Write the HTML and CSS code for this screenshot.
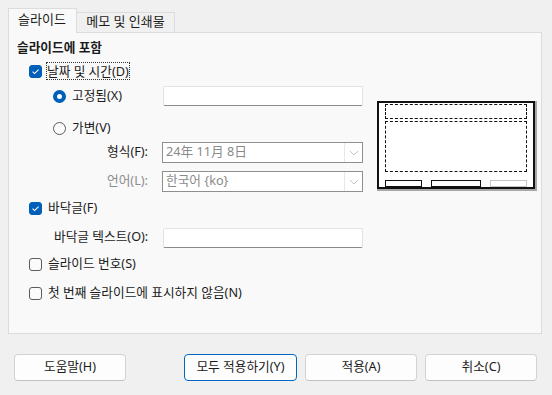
FILE: index.html
```html
<!DOCTYPE html>
<html lang="ko">
<head>
<meta charset="utf-8">
<link rel="stylesheet" href="styles.css">
</head>
<body>
<div class="dialog">
  <div class="tabs">
    <div class="tab active">슬라이드</div>
    <div class="tab">메모 및 인쇄물</div>
  </div>
  <div class="panel">
    <div class="form">
      <div class="row heading">슬라이드에 포함</div>
      <div class="row r-date">
        <span class="check on"><svg viewBox="0 0 13 13" width="13" height="13"><path d="M3.6 6.7 L5.6 8.6 L9.6 4.6" fill="none" stroke="#fff" stroke-width="1.1"/></svg></span>
        <span class="lbl focus">날짜 및 시간(D)</span>
      </div>
      <div class="row r-fixed">
        <span class="radio on"></span>
        <span class="lbl">고정됨(X)</span>
        <span class="input"></span>
      </div>
      <div class="row r-var">
        <span class="radio"></span>
        <span class="lbl">가변(V)</span>
      </div>
      <div class="row r-format">
        <span class="flabel">형식(F):</span>
        <span class="combo"><span class="ctext">24年 11月 8日</span><span class="cbtn"><svg viewBox="0 0 10 6" width="10" height="6"><path d="M1 1 L5 5 L9 1" fill="none" stroke="#c4c4c4" stroke-width="1"/></svg></span></span>
      </div>
      <div class="row r-lang">
        <span class="flabel dis">언어(L):</span>
        <span class="combo"><span class="ctext">한국어 {ko}</span><span class="cbtn"><svg viewBox="0 0 10 6" width="10" height="6"><path d="M1 1 L5 5 L9 1" fill="none" stroke="#c4c4c4" stroke-width="1"/></svg></span></span>
      </div>
      <div class="row r-footer">
        <span class="check on"><svg viewBox="0 0 13 13" width="13" height="13"><path d="M3.6 6.7 L5.6 8.6 L9.6 4.6" fill="none" stroke="#fff" stroke-width="1.1"/></svg></span>
        <span class="lbl">바닥글(F)</span>
      </div>
      <div class="row r-ftext">
        <span class="flabel left">바닥글 텍스트(O):</span>
        <span class="input"></span>
      </div>
      <div class="row r-num">
        <span class="check"></span>
        <span class="lbl">슬라이드 번호(S)</span>
      </div>
      <div class="row r-first">
        <span class="check"></span>
        <span class="lbl">첫 번째 슬라이드에 표시하지 않음(N)</span>
      </div>
    </div>
    <div class="preview">
      <div class="pv-head"></div>
      <div class="pv-body"></div>
      <div class="pv-foot">
        <span class="pv-box w36"></span>
        <span class="pv-box w49"></span>
        <span class="pv-box w36 gray"></span>
      </div>
    </div>
  </div>
  <div class="buttons">
    <button class="btn">도움말(H)</button>
    <div class="btn-group">
      <button class="btn default">모두 적용하기(Y)</button>
      <button class="btn">적용(A)</button>
      <button class="btn">취소(C)</button>
    </div>
  </div>
</div>
</body>
</html>
```

FILE: styles.css
```css
* { box-sizing: border-box; }
html, body {
  margin: 0;
  padding: 0;
  background: #f0f0f0;
}
body {
  width: 552px;
  height: 395px;
  overflow: hidden;
  font-family: "Noto Sans", "Noto Sans CJK KR", sans-serif;
  font-size: 12.7px;
  color: #1b1b1b;
}
.dialog {
  padding-top: 8px;
}
.tabs {
  display: flex;
  align-items: flex-end;
  margin-left: 8px;
  height: 24px;
}
.tab {
  height: 20px;
  border: 1px solid #dcdcdc;
  border-bottom: none;
  border-left: none;
  background: #f0f0f0;
  display: flex;
  align-items: center;
  line-height: 1;
  font-size: 13px;
}
.tab.active {
  width: 69px;
  height: 25px;
  padding: 0 0 3px 9px;
  border-left: 1px solid #dcdcdc;
  background: #f9f9f9;
  position: relative;
  z-index: 1;
  margin-bottom: -1px;
}
.tab:not(.active) {
  width: 98px;
  padding-bottom: 2px;
  justify-content: center;
}
.panel {
  margin: 0 10px 0 8px;
  height: 302px;
  border: 1px solid #dcdcdc;
  background: #f9f9f9;
  display: flex;
  padding: 6px 0 0 8px;
}
.form {
  width: 346px;
  display: flex;
  flex-direction: column;
}
.row {
  display: flex;
  align-items: center;
  line-height: 1;
  white-space: nowrap;
}
.heading {
  height: 18px;
  font-weight: 700;
  padding-bottom: 2px;
}
.r-date { height: 18px; margin-top: 5px; padding-left: 12px; }
.r-fixed { height: 20px; margin-top: 6px; padding-left: 36px; }
.r-var { height: 18px; margin-top: 13px; padding-left: 36px; }
.r-format { height: 21px; margin-top: 5px; }
.r-lang { height: 21px; margin-top: 8px; }
.r-footer { height: 18px; margin-top: 7px; padding-left: 12px; }
.r-ftext { height: 21px; margin-top: 10px; }
.r-num { height: 18px; margin-top: 7px; padding-left: 12px; }
.r-first { height: 18px; margin-top: 11px; padding-left: 12px; }

.check {
  width: 13px;
  height: 13px;
  border: 1px solid #5c5c5c;
  border-radius: 3px;
  background: #fbfbfb;
  display: inline-flex;
  flex: none;
}
.check.on {
  border-color: #005fb8;
  background: #005fb8;
}
.check svg { display: block; margin: -1px; }
.lbl {
  margin-left: 5px;
  padding: 2px 1px 4px;
}
.lbl.focus {
  margin-left: 4px;
  padding: 3px 1px;
  outline: 1px dotted #333;
  outline-offset: -1px;
}
.radio {
  width: 13px;
  height: 13px;
  border-radius: 50%;
  border: 1px solid #5c5c5c;
  background: #fbfbfb;
  flex: none;
}
.radio.on {
  border: 4px solid #005fb8;
  background: #fff;
}
.input {
  margin-left: auto;
  width: 200px;
  height: 20px;
  background: #fff;
  border: 1px solid #e3e3e3;
  border-bottom-color: #8a8a8a;
  border-radius: 2px;
}
.flabel {
  width: 132px;
  text-align: right;
  padding: 0 1px 2px 0;
}
.flabel.dis { color: #8d8d8d; }
.flabel.left {
  text-align: left;
  padding-left: 37px;
  width: auto;
}
.combo {
  margin-left: auto;
  width: 201px;
  height: 21px;
  border: 1px solid #8f8f8f;
  background: #fff;
  display: flex;
  align-items: center;
}
.ctext {
  flex: 1;
  padding: 0 0 2px 3px;
  color: #8a8a8a;
}
.cbtn {
  width: 18px;
  height: 19px;
  border-left: 1px solid #e8e8e8;
  display: flex;
  align-items: center;
  justify-content: center;
}
.preview {
  margin-top: 62px;
  margin-left: 14px;
  width: 158px;
  height: 88px;
  border: 2px solid #111;
  background: #fff;
  box-shadow: 1px 1px 0 1px #a8a8a8;
  padding: 1px 6px 0 6px;
  display: flex;
  flex-direction: column;
}
.pv-head {
  height: 15px;
  border: 1px dashed #111;
}
.pv-body {
  height: 51px;
  margin-top: 2px;
  border: 1px dashed #111;
}
.pv-foot {
  margin-top: 8px;
  height: 7px;
  display: flex;
  justify-content: space-between;
}
.pv-box {
  height: 7px;
  border: 1px solid #111;
}
.pv-box.w36 { width: 37px; }
.pv-box.w49 { width: 50px; }
.pv-box.gray { border-color: #c4c4c4; }
.buttons {
  display: flex;
  margin-top: 20px;
  padding: 0 15px 0 14px;
}
.btn-group {
  margin-left: auto;
  display: flex;
  gap: 8px;
}
.btn {
  width: 112px;
  height: 27px;
  background: #fdfdfd;
  border: 1px solid #d3d3d3;
  border-bottom-color: #c2c2c2;
  border-radius: 4px;
  font-family: inherit;
  font-size: 12.7px;
  color: #1b1b1b;
  padding: 0 0 2px;
  line-height: 1;
}
.btn.default {
  width: 113px;
  border-color: #0067c0;
}
```
